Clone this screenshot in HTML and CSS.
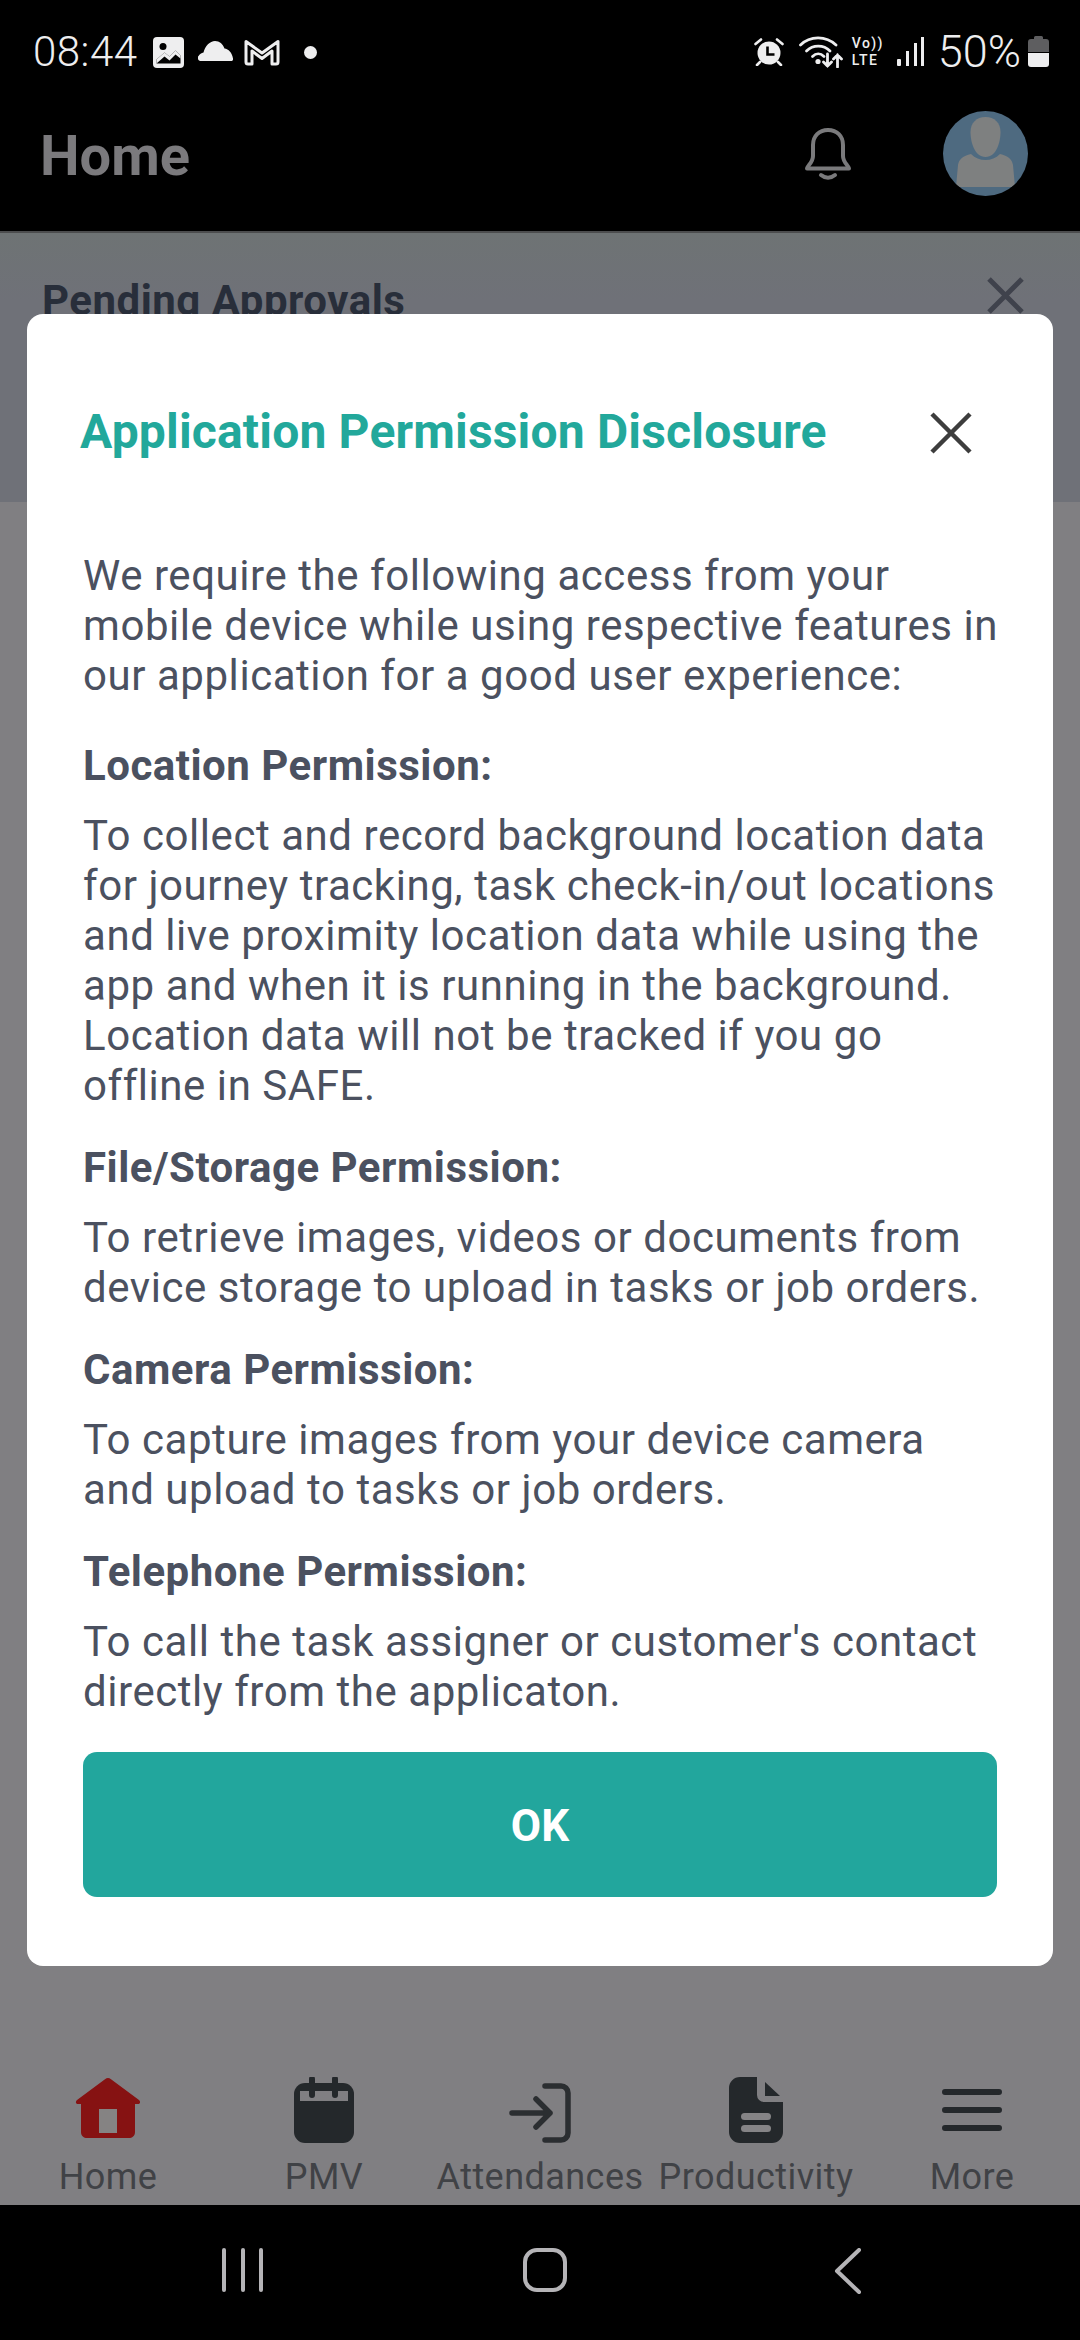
FILE: index.html
```html
<!DOCTYPE html>
<html lang="en">
<head>
<meta charset="utf-8">
<title>Home</title>
<link rel="stylesheet" href="styles.css">
</head>
<body>
<div class="screen">
  <header class="top">
    <div class="status">
      <div class="status-left">
        <span class="time">08:44</span>
        <svg class="s-img" width="31" height="31" viewBox="0 0 31 31"><rect width="31" height="31" rx="4" fill="#eeeeef"/><path d="M3.500 26.500v-4l8-7 5 4 6-6 5 5v8z" fill="#000"/><path d="M3.500 22.500l8-7 5 4 6-6 5 5v3l-5-4-6 6-5-4-8 7z" fill="#eeeeef"/><circle cx="10" cy="9.500" r="3.500" fill="#000"/></svg>
        <svg class="s-cloud" width="35" height="20" viewBox="0 0 35 20"><path d="M3 20a3 3 0 0 1-2.500-5c1-2 3-3 5-3.500C7 5 12 0 17 0c4.500 0 8 3 9.500 7.500 4 .5 7.500 4 8.500 10 .3 1.500-.5 2.500-2 2.500z" fill="#eeeeef"/></svg>
        <svg class="s-m" width="36" height="28" viewBox="0 0 36 28"><path d="M2 3.500L18 15 34 3.500V24a2 2 0 0 1-2 2h-4V13l-10 7.500L8 13v13H4a2 2 0 0 1-2-2z" fill="none" stroke="#eeeeef" stroke-width="3" stroke-linejoin="round"/></svg>
        <span class="s-dot"></span>
      </div>
      <div class="status-right">
        <svg class="s-alarm" width="30" height="28" viewBox="0 0 30 28"><circle cx="15" cy="15" r="11.500" fill="#eeeeef"/><path d="M13.500 8.500v8h7" fill="none" stroke="#000" stroke-width="2.600"/><path d="M1.500 6L7 1.500M28.500 6L23 1.500M6 24l-3 3M24 24l3 3" stroke="#eeeeef" stroke-width="2.600" stroke-linecap="round"/></svg>
        <svg class="s-wifi" width="45" height="33" viewBox="0 0 45 33"><g fill="none" stroke="#eeeeef" stroke-width="2.800" stroke-linecap="round"><path d="M1.500 10C11 .5 27 .5 37 10"/><path d="M7.500 16c6.500-6.500 17-6.500 23.500 0"/><path d="M13.500 21.500c3.500-3.500 8-3.500 11.500 0"/><path d="M28.500 19v12M24.500 27l4 4 4-4M38.500 32V20M34.500 24l4-4 4 4"/></g><circle cx="19" cy="26.500" r="2.600" fill="#eeeeef"/></svg>
        <div class="s-volte"><span>Vo))</span><span>LTE</span></div>
        <svg class="s-signal" width="27" height="29" viewBox="0 0 27 29"><g fill="#eeeeef"><rect x="0" y="22" width="4" height="7" rx="1"/><rect x="9" y="14" width="3" height="15"/><rect x="17" y="6" width="3" height="23"/><rect x="24" y="0" width="3" height="29"/></g></svg>
        <span class="pct">50%</span>
        <svg class="s-batt" width="21" height="31" viewBox="0 0 21 31"><path d="M6 3V1.500A1.500 1.500 0 0 1 7.500 0h6A1.500 1.500 0 0 1 15 1.500V3h3a3 3 0 0 1 3 3v10H0V6a3 3 0 0 1 3-3z" fill="#5e5e60"/><path d="M0 17h21v11a3 3 0 0 1-3 3H3a3 3 0 0 1-3-3z" fill="#eeeeef"/></svg>
      </div>
    </div>
    <div class="appbar">
      <h1 class="page-title">Home</h1>
      <svg class="bell" width="46" height="52" viewBox="0 0 46 52"><path d="M2 40.500c0-1 1-2 2-3.500 2.500-3 4-5 4-9V17C8 8 14 2 23 2s15 6 15 15v11c0 4 1.500 6 4 9 1 1.500 2 2.500 2 3.500z" fill="none" stroke="#7a7a7c" stroke-width="4" stroke-linejoin="round"/><path d="M16 47c4 3.500 10 3.500 14 0" fill="none" stroke="#7a7a7c" stroke-width="4" stroke-linecap="round"/></svg>
      <svg class="avatar" width="85" height="85" viewBox="0 0 85 85"><defs><clipPath id="avatar-clip"><circle cx="42.500" cy="42.500" r="42.500"/></clipPath></defs><circle cx="42.500" cy="42.500" r="42.500" fill="#4e6a80"/><g clip-path="url(#avatar-clip)"><path d="M42.500 6c9 0 15 6 15 15 0 10-4 25-15 25s-15-15-15-25c0-9 6-15 15-15z" fill="#7e8080"/><path d="M28 43c4 4 9 6 14.500 6S53 47 57 43c8 2 12 5 13 11l2 22H13l2-22c1-6 5-9 13-11z" fill="#7e8080"/></g></svg>
    </div>
  </header>
  <section class="pending">
    <h2 class="pending-title">Pending Approvals</h2>
    <svg class="pending-x" width="37" height="37" viewBox="0 0 37 37"><path d="M2 2l33 33M35 2L2 35" stroke="#3f424c" stroke-width="5"/></svg>
  </section>
  <main class="rest"></main>
  <nav class="tabs">
    <div class="tab tab-active">
      <svg width="66" height="62" viewBox="0 0 66 62"><path d="M33 1c1 0 2 .5 3 1.200L64 23c2 2 1 4-1 4h-3v28c0 4-3 6-6 6H12c-3 0-6-2-6-6V27H3c-2 0-3-2-1-4L30 2.200C31 1.500 32 1 33 1z" fill="#861212"/><rect x="24" y="32" width="18" height="24" fill="#858383"/></svg>
      <span>Home</span>
    </div>
    <div class="tab">
      <svg width="60" height="66" viewBox="0 0 60 66"><rect x="0" y="6" width="60" height="60" rx="11" fill="#24282b"/><rect x="6" y="14" width="48" height="10" fill="#807f82"/><path d="M18 2v16M41 2v16" stroke="#24282b" stroke-width="6" stroke-linecap="round"/></svg>
      <span>PMV</span>
    </div>
    <div class="tab">
      <svg width="62" height="60" viewBox="0 0 62 60"><g fill="none" stroke="#2b2e31" stroke-width="5.500" stroke-linecap="round" stroke-linejoin="round"><path d="M3 30h38M27 16l14 14-14 14"/><path d="M36 3h16a7 7 0 0 1 7 7v40a7 7 0 0 1-7 7H36"/></g></svg>
      <span>Attendances</span>
    </div>
    <div class="tab">
      <svg width="54" height="66" viewBox="0 0 54 66"><path d="M11 0h17v18a7 7 0 0 0 7 7h19v30a11 11 0 0 1-11 11H11A11 11 0 0 1 0 55V11A11 11 0 0 1 11 0z" fill="#24282b"/><path d="M36 5l15 14H36z" fill="#24282b"/><rect x="12" y="36" width="30" height="7" rx="3.500" fill="#858486"/><rect x="12" y="48" width="30" height="7" rx="3.500" fill="#858486"/></svg>
      <span>Productivity</span>
    </div>
    <div class="tab">
      <svg width="60" height="66" viewBox="0 0 60 66"><path d="M3 15h54M3 33h54M3 51h54" stroke="#24282b" stroke-width="6" stroke-linecap="round"/></svg>
      <span>More</span>
    </div>
  </nav>
  <footer class="sysnav">
    <svg class="sys-recents" width="42" height="44" viewBox="0 0 42 44"><path d="M2 2v40M21 2v40M39 2v40" stroke="#b5b4b7" stroke-width="4" stroke-linecap="round"/></svg>
    <svg class="sys-home" width="44" height="44" viewBox="0 0 44 44"><rect x="2" y="2" width="40" height="40" rx="12" fill="none" stroke="#b5b4b7" stroke-width="4"/></svg>
    <svg class="sys-back" width="28" height="46" viewBox="0 0 28 46"><path d="M25 2L3 23l22 21" fill="none" stroke="#b5b4b7" stroke-width="4" stroke-linecap="round" stroke-linejoin="round"/></svg>
  </footer>
</div>

<div class="modal">
  <div class="modal-head">
    <h2 class="modal-title">Application Permission Disclosure</h2>
    <svg class="modal-x" width="42" height="42" viewBox="0 0 42 42"><path d="M2 2l38 38M40 2L2 40" stroke="#3d3d3d" stroke-width="4.500"/></svg>
  </div>
  <div class="modal-body">
    <p class="intro">We require the following access from your<br>mobile device while using respective features in<br>our application for a good user experience:</p>
    <h3>Location Permission:</h3>
    <p>To collect and record background location data<br>for journey tracking, task check-in/out locations<br>and live proximity location data while using the<br>app and when it is running in the background.<br>Location data will not be tracked if you go<br>offline in SAFE.</p>
    <h3>File/Storage Permission:</h3>
    <p>To retrieve images, videos or documents from<br>device storage to upload in tasks or job orders.</p>
    <h3>Camera Permission:</h3>
    <p>To capture images from your device camera<br>and upload to tasks or job orders.</p>
    <h3>Telephone Permission:</h3>
    <p>To call the task assigner or customer's contact<br>directly from the applicaton.</p>
  </div>
  <button class="ok" type="button">OK</button>
</div>
</body>
</html>
```
FILE: styles.css
```css
* { box-sizing: border-box; }
html, body { margin: 0; padding: 0; }
body { width: 1080px; height: 2340px; position: relative; overflow: hidden; background: #807f82; font-family: Roboto, "Noto Sans", sans-serif; }
h1, h2, h3, p { margin: 0; }
svg { display: block; flex: none; }

.screen { width: 1080px; height: 2340px; display: flex; flex-direction: column; }

.top { background: #000; height: 233px; border-bottom: 2px solid #4c4d4e; flex: none; }
.status { height: 104px; padding: 35px 31px 0 33px; display: flex; justify-content: space-between; align-items: flex-start; color: #eeeeef; }
.status-left, .status-right { display: flex; align-items: flex-start; }
.time { font-size: 42px; font-weight: 300; line-height: 34px; letter-spacing: .5px; }
.s-img { margin: 2px 0 0 15px; }
.s-cloud { margin: 6px 0 0 14px; }
.s-m { margin: 3px 0 0 11px; }
.s-dot { width: 13px; height: 13px; border-radius: 50%; background: #eeeeef; margin: 11px 0 0 24px; }
.s-alarm { margin-top: 3px; }
.s-wifi { margin: 0 0 0 15px; }
.s-volte { margin: 0 0 0 8px; width: 33px; display: flex; flex-direction: column; font-size: 14px; line-height: 17px; font-weight: 500; letter-spacing: 1.4px; }
.s-signal { margin: 2px 0 0 12px; }
.pct { margin-left: 14px; font-size: 45px; font-weight: 300; line-height: 34px; }
.s-batt { margin: 1px 0 0 7px; }

.appbar { height: 127px; padding: 0 52px 0 40px; display: flex; align-items: flex-start; }
.page-title { font-size: 56px; line-height: 58px; font-weight: 700; color: #7b7a7d; margin: 23px auto 0 0; }
.bell { margin: 24px 92px 0 0; }
.avatar { margin-top: 7px; }

.pending { height: 269px; flex: none; padding: 44px 56px 0 42px; background: linear-gradient(#6e7374, #6f7178 25%); display: flex; justify-content: space-between; align-items: flex-start; }
.pending-title { font-size: 42px; line-height: 48px; font-weight: 700; letter-spacing: .5px; color: #282e3a; }

.rest { flex: 1; background: #807f82; }

.tabs { height: 209px; flex: none; padding-bottom: 6px; display: grid; grid-template-columns: repeat(5, 216px); align-items: end; }
.tab { display: flex; flex-direction: column; align-items: center; color: #404246; font-size: 36px; letter-spacing: .45px; line-height: 44px; white-space: nowrap; }
.tab svg { margin-bottom: 12px; }
.tab-active svg { margin-bottom: 16px; }

.sysnav { height: 135px; flex: none; background: #000; padding: 43px 0 0 222px; display: flex; align-items: flex-start; }
.sys-home { margin-left: 259px; }
.sys-back { margin-left: 267px; }

.modal { position: absolute; left: 27px; top: 314px; width: 1026px; height: 1652px; background: #fff; border-radius: 16px; padding: 88px 56px 0; display: flex; flex-direction: column; }
.modal-head { display: flex; justify-content: space-between; align-items: center; height: 60px; padding-right: 25px; }
.modal-title { font-size: 48px; line-height: 60px; font-weight: 700; letter-spacing: .18px; color: #22a89b; margin-left: -3px; white-space: nowrap; }
.modal-x { margin-top: 2px; }
.modal-body { margin-top: 89px; color: #4b5160; font-size: 42px; letter-spacing: .55px; line-height: 50px; white-space: nowrap; }
.modal-body h3 { font-size: 42px; letter-spacing: .5px; line-height: 50px; font-weight: 700; margin: 32px 0 20px; }
.modal-body .intro { margin-bottom: 40px; }
.modal-body .intro + h3 { margin-top: 0; }
.ok { margin-top: 35px; height: 145px; width: 914px; border: 0; border-radius: 14px; background: #22a69d; color: #fff; font: 700 44px Roboto, sans-serif; padding-top: 3px; }
```
